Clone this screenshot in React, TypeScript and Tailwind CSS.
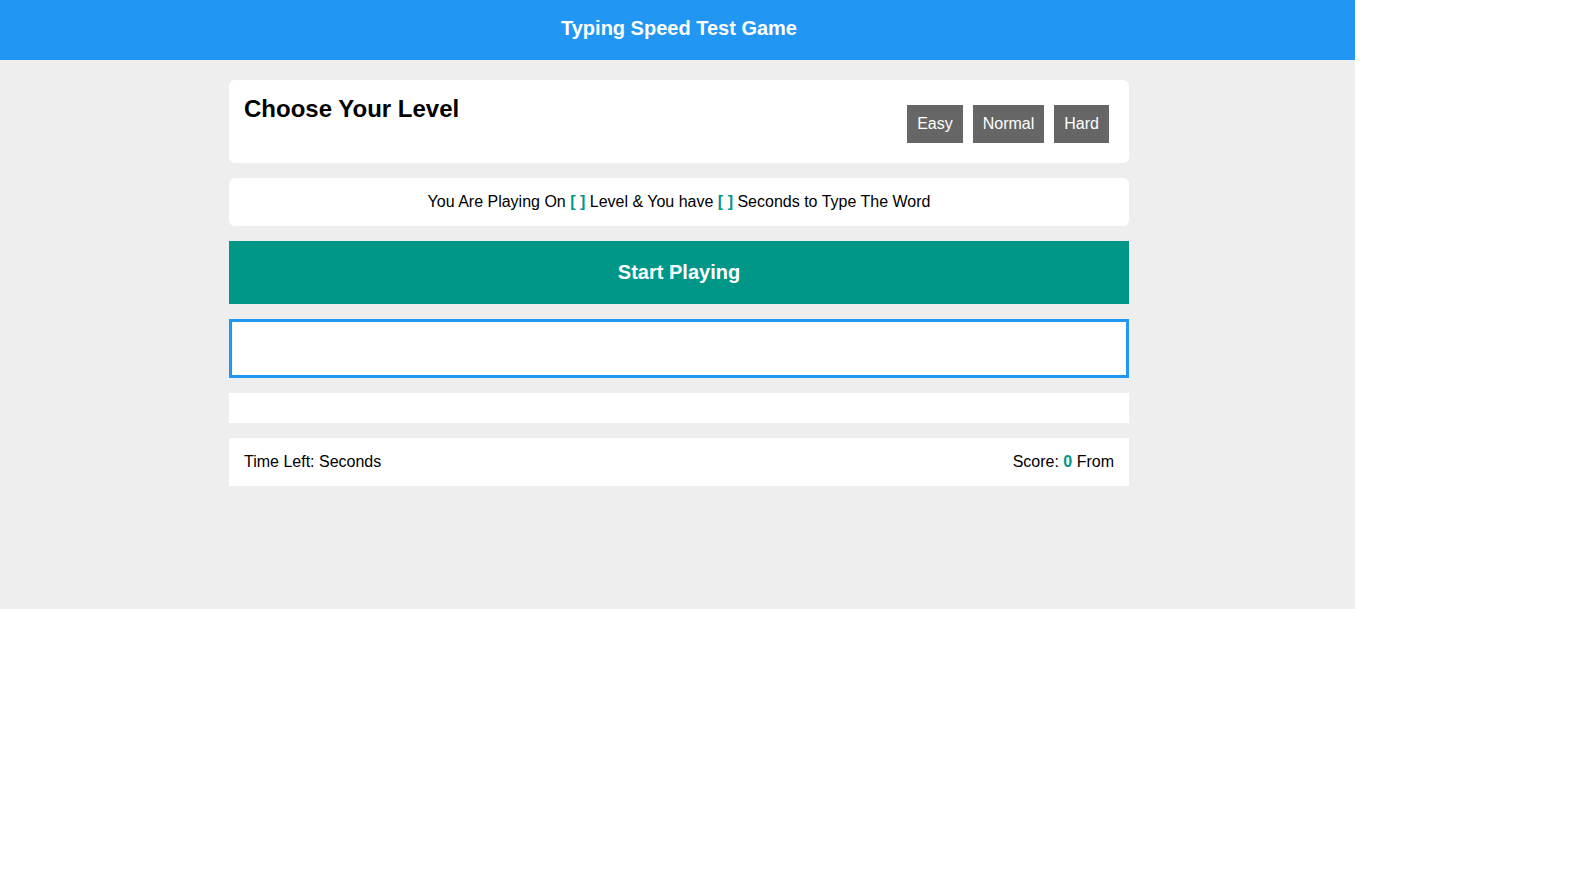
export default function App() {
  return (
    <div className="w-[1355px] h-[609px] bg-[#eeeeee] text-black" style={{ fontFamily: '"Liberation Sans", Arial, sans-serif' }}>
      <div className="h-[60px] bg-[#2196f3] pt-[17px] pl-[3px] text-center text-[20px] font-bold leading-[23px] text-white">
        Typing Speed Test Game
      </div>
      <div className="w-[900px] ml-[229px] pt-[20px] flex flex-col">
        <div className="flex justify-between items-start bg-white rounded-[6px] pt-[15px] pb-[20px] pl-[15px] pr-[20px]">
          <h2 className="m-0 text-[24px] font-bold leading-[28px]">Choose Your Level</h2>
          <div className="flex gap-[10px] mt-[10px]">
            <span className="bg-[#666666] text-white text-[16px] leading-[18px] p-[10px]">Easy</span>
            <span className="bg-[#666666] text-white text-[16px] leading-[18px] p-[10px]">Normal</span>
            <span className="bg-[#666666] text-white text-[16px] leading-[18px] p-[10px]">Hard</span>
          </div>
        </div>
        <div className="mt-[15px] bg-white rounded-[6px] py-[15px] text-center text-[16px] leading-[18px]">
          You Are Playing On <span className="font-bold text-[#009688]">[ ]</span> Level &amp; You have{" "}
          <span className="font-bold text-[#009688]">[ ]</span> Seconds to Type The Word
        </div>
        <div className="mt-[15px] h-[63px] bg-[#009688] flex items-center justify-center text-white text-[20px] font-bold leading-[23px]">
          Start Playing
        </div>
        <input
          className="mt-[15px] h-[59px] w-full border-[3px] border-[#2196f3] bg-white outline-none"
          type="text"
        />
        <div className="mt-[15px] h-[30px] bg-white"></div>
        <div className="mt-[15px] h-[48px] bg-white flex items-center justify-between px-[15px] text-[16px] leading-[18px]">
          <span>Time Left: Seconds</span>
          <span>
            Score: <span className="font-bold text-[#009688]">0</span> From
          </span>
        </div>
      </div>
    </div>
  );
}
